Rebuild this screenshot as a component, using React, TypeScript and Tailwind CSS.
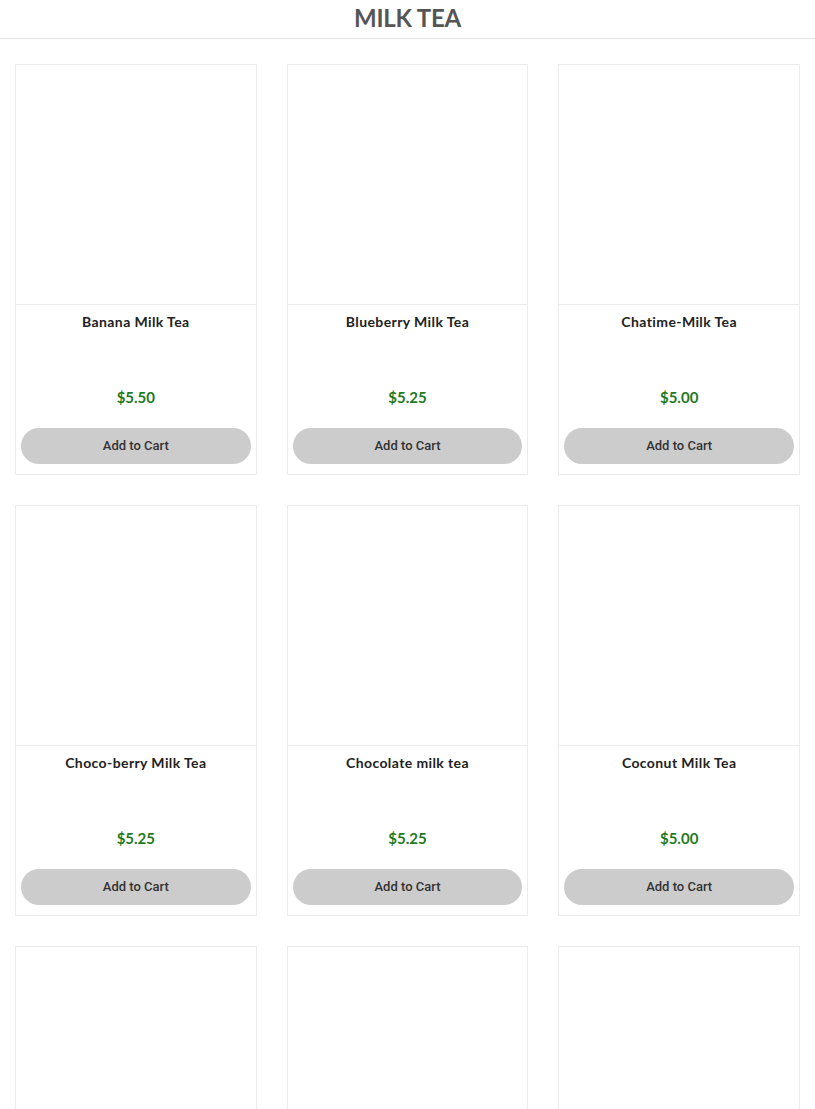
const products = [
  { name: "Banana Milk Tea", price: "$5.50" },
  { name: "Blueberry Milk Tea", price: "$5.25" },
  { name: "Chatime-Milk Tea", price: "$5.00" },
  { name: "Choco-berry Milk Tea", price: "$5.25" },
  { name: "Chocolate milk tea", price: "$5.25" },
  { name: "Coconut Milk Tea", price: "$5.00" },
  { name: "Grape Milk Tea", price: "$5.25" },
  { name: "Honeydew Milk Tea", price: "$5.25" },
  { name: "Mango Milk Tea", price: "$5.25" },
];

const ProductCard = ({ name, price }: { name: string; price: string }) => (
  <div className="flex flex-col border border-[#ececec] bg-white">
    <div className="h-[240px] border-b border-[#ececec]"></div>
    <div className="flex flex-col items-center px-[5px] pt-[7px] pb-[10px]">
      <h3 className="text-[14px] leading-[20px] font-bold tracking-[0.4px] text-[#222] font-['Lato',sans-serif]">
        {name}
      </h3>
      <p className="mt-[54px] text-[15px] leading-[22px] font-bold text-[#1f7a1f] font-['Lato',sans-serif]">
        {price}
      </p>
      <button className="mt-[20px] w-full h-[36px] rounded-full bg-[#cccccc] text-[13px] font-medium text-[#333] font-['Roboto',sans-serif]">
        Add to Cart
      </button>
    </div>
  </div>
);

export default function App() {
  return (
    <div className="min-h-screen bg-white">
      <header className="h-[39px] border-b border-[#e5e5e5] flex items-center justify-center">
        <h1 className="text-[24px] leading-[30px] -mt-[2px] font-bold text-[#555] tracking-[-0.2px] font-['Lato',sans-serif]">
          MILK TEA
        </h1>
      </header>
      <main className="grid grid-cols-3 gap-x-[30px] gap-y-[30px] px-[15px] pt-[25px] pb-[30px]">
        {products.map((p) => (
          <ProductCard key={p.name} name={p.name} price={p.price} />
        ))}
      </main>
    </div>
  );
}
